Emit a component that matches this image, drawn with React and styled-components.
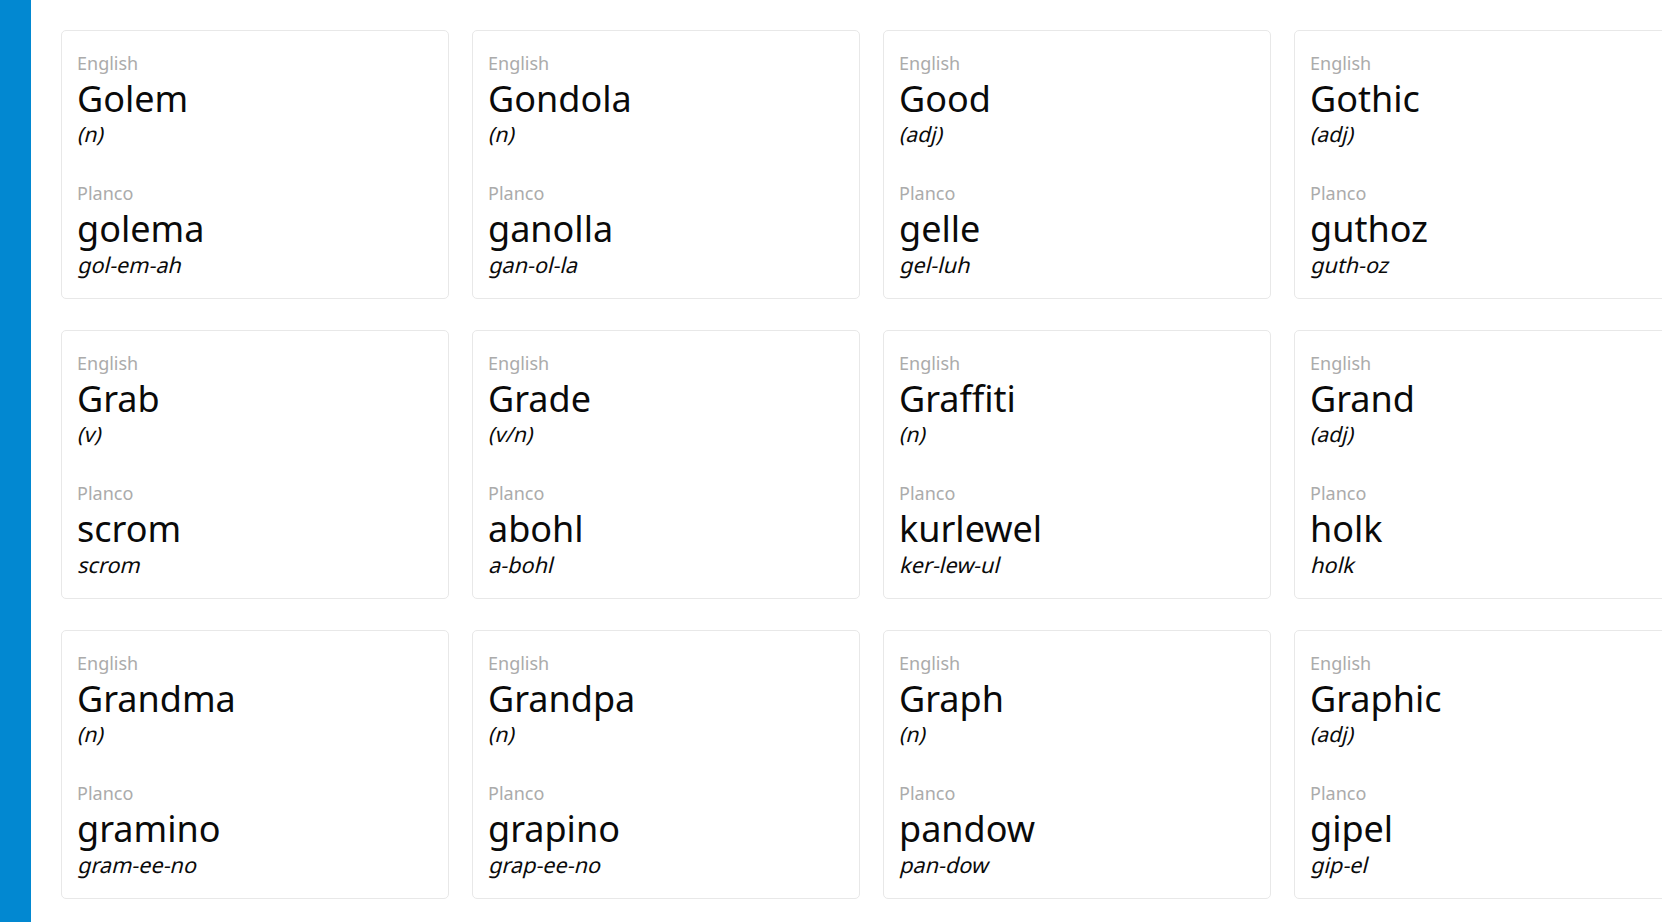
import React from 'react';
import styled, { createGlobalStyle } from 'styled-components';

const GlobalStyle = createGlobalStyle`
  html, body {
    margin: 0;
    padding: 0;
    background: #fff;
    overflow: hidden;
  }
  body {
    font-family: "Noto Sans", "Open Sans", sans-serif;
    color: #0a0a0a;
  }
`;

const words = [
  { en: 'Golem', pos: 'n', pl: 'golema', say: 'gol-em-ah' },
  { en: 'Gondola', pos: 'n', pl: 'ganolla', say: 'gan-ol-la' },
  { en: 'Good', pos: 'adj', pl: 'gelle', say: 'gel-luh' },
  { en: 'Gothic', pos: 'adj', pl: 'guthoz', say: 'guth-oz' },
  { en: 'Grab', pos: 'v', pl: 'scrom', say: 'scrom' },
  { en: 'Grade', pos: 'v/n', pl: 'abohl', say: 'a-bohl' },
  { en: 'Graffiti', pos: 'n', pl: 'kurlewel', say: 'ker-lew-ul' },
  { en: 'Grand', pos: 'adj', pl: 'holk', say: 'holk' },
  { en: 'Grandma', pos: 'n', pl: 'gramino', say: 'gram-ee-no' },
  { en: 'Grandpa', pos: 'n', pl: 'grapino', say: 'grap-ee-no' },
  { en: 'Graph', pos: 'n', pl: 'pandow', say: 'pan-dow' },
  { en: 'Graphic', pos: 'adj', pl: 'gipel', say: 'gip-el' },
];

const Page = styled.div`
  display: flex;
  min-height: 100vh;
  width: 1800px;
`;

const SideBar = styled.div`
  width: 31px;
  flex-shrink: 0;
  background: #0288d1;
  min-height: 100vh;
`;

const Main = styled.main`
  padding: 30px 0 0 30px;
`;

const Grid = styled.div`
  display: grid;
  grid-template-columns: repeat(4, 388px);
  column-gap: 23px;
  row-gap: 31px;
`;

const Card = styled.div`
  box-sizing: border-box;
  height: 269px;
  border: 1px solid #e8e8e8;
  border-radius: 5px;
  padding: 20px 16px 0 15px;
  display: flex;
  flex-direction: column;
`;

const Label = styled.div`
  font-size: 18px;
  line-height: 24px;
  color: #ababab;
  margin-top: ${p => (p.second ? '33px' : '0')};
`;

const Word = styled.div`
  font-size: 36px;
  line-height: 42px;
  margin-top: 3px;
`;

const Note = styled.div`
  font-size: ${p => (p.big ? '21.6px' : '21px')};
  line-height: 28px;
  margin-top: ${p => (p.big ? '1px' : '0')};
`;

/* the reference shows a slanted upright face, not the true italic */
const Slant = styled.span`
  display: inline-block;
  transform: skewX(-14deg);
  transform-origin: 0 22px;
`;

function WordCard({ word }) {
  return (
    <Card>
      <Label>English</Label>
      <Word>{word.en}</Word>
      <Note>
        <Slant>({word.pos})</Slant>
      </Note>
      <Label second>Planco</Label>
      <Word>{word.pl}</Word>
      <Note big>
        <Slant>{word.say}</Slant>
      </Note>
    </Card>
  );
}

export default function App() {
  return (
    <>
      <GlobalStyle />
      <Page>
        <SideBar />
        <Main>
          <Grid>
            {words.map(w => (
              <WordCard key={w.en} word={w} />
            ))}
          </Grid>
        </Main>
      </Page>
    </>
  );
}
